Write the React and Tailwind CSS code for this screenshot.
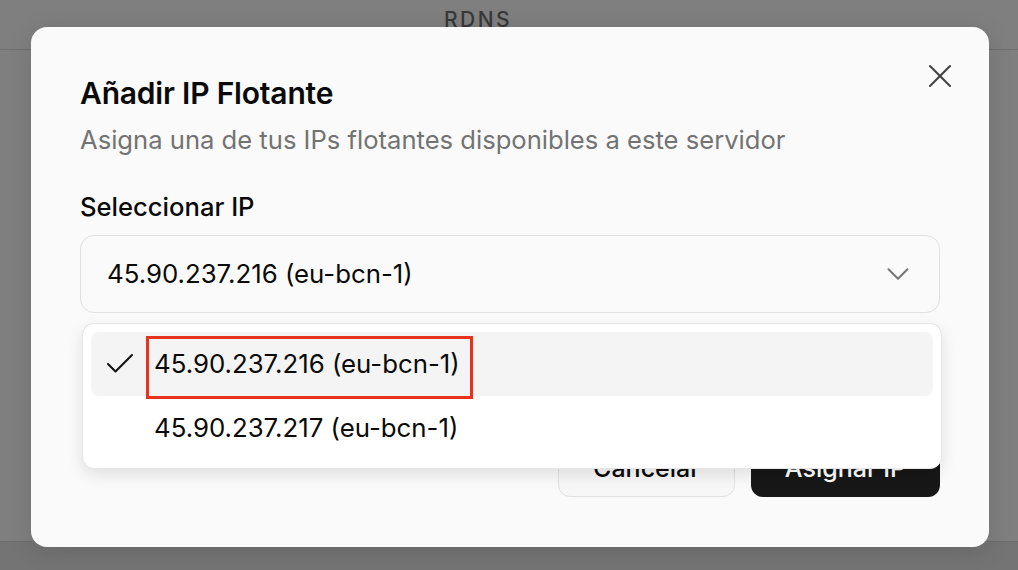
import { Check, ChevronDown, X } from "lucide-react";

const ips = [
  { value: "45.90.237.216", region: "eu-bcn-1" },
  { value: "45.90.237.217", region: "eu-bcn-1" },
];

const App = () => {
  const selected = ips[0];

  return (
    <div
      className="relative w-[1018px] h-[570px] overflow-hidden bg-[#7f7f7f]"
      style={{ fontFamily: "Inter, 'Noto Sans', sans-serif" }}
    >
      {/* page behind the overlay */}
      <div className="flex flex-col h-full">
        <div className="h-[50px] flex items-start justify-center border-b border-[#6f6f6f] pr-[62px]">
          <span className="mt-[4px] text-[21px] font-medium tracking-[2.5px] text-[#383838]">
            RDNS
          </span>
        </div>
        <div className="flex-1" />
        <div className="h-[29px] border-t border-[#6c6c6c] bg-[#747474]" />
      </div>

      {/* dialog */}
      <div className="absolute left-[31px] top-[27px] w-[958px] h-[520px] rounded-[16px] bg-[#fafafa] shadow-[0_4px_24px_rgba(0,0,0,0.12)] flex flex-col px-[49px] pt-[48px] pb-[50px]">
        <button className="absolute left-[889px] top-[29px] text-[#444]">
          <X size={40} strokeWidth={1.25} />
        </button>

        <h2 className="text-[30px] leading-[36px] font-semibold text-[#0a0a0a] tracking-[-0.2px]">
          Añadir IP Flotante
        </h2>
        <p className="mt-[13px] text-[25.6px] leading-[32px] text-[#737373]">
          Asigna una de tus IPs flotantes disponibles a este servidor
        </p>

        <label className="mt-[35px] text-[25.6px] leading-[32px] font-medium text-[#0a0a0a]">
          Seleccionar IP
        </label>
        <div className="mt-[12px] h-[78px] rounded-[14px] border border-[#e0e0e0] bg-[#fafafa] flex items-center justify-between pl-[26px] pr-[22px]">
          <span className="text-[25.8px] text-[#0a0a0a]">
            {selected.value} ({selected.region})
          </span>
          <ChevronDown size={38} strokeWidth={1.25} className="text-[#777]" />
        </div>

        <div className="flex-1" />

        <div className="flex justify-end gap-[16px]">
          <button className="w-[177px] h-[56px] rounded-[12px] border border-[#e0e0e0] bg-[#f7f7f7] text-[25px] font-medium text-[#0a0a0a]">
            Cancelar
          </button>
          <button className="w-[189px] h-[56px] rounded-[12px] bg-[#171717] text-[25px] font-medium text-white">
            Asignar IP
          </button>
        </div>
      </div>

      {/* open select menu */}
      <div className="absolute left-[82px] top-[323px] w-[860px] rounded-[12px] border border-[#e6e6e6] bg-white p-[8px] shadow-[0_6px_16px_rgba(0,0,0,0.1)] flex flex-col">
        {ips.map((ip, i) => (
          <div
            key={ip.value}
            className={`relative h-[64px] rounded-[8px] flex items-center pl-[63px] ${
              i === 0 ? "bg-[#f4f4f4]" : ""
            }`}
          >
            {i === 0 && (
              <Check
                size={36}
                strokeWidth={1.35}
                className="absolute left-[11px] text-[#111]"
              />
            )}
            <span className="text-[25.8px] text-[#0a0a0a]">
              {ip.value} ({ip.region})
            </span>
            {i === 0 && (
              <div className="absolute left-[55px] top-[4px] w-[327px] h-[63px] border-[3px] border-[#e8321e]" />
            )}
          </div>
        ))}
      </div>
    </div>
  );
};

export default App;
